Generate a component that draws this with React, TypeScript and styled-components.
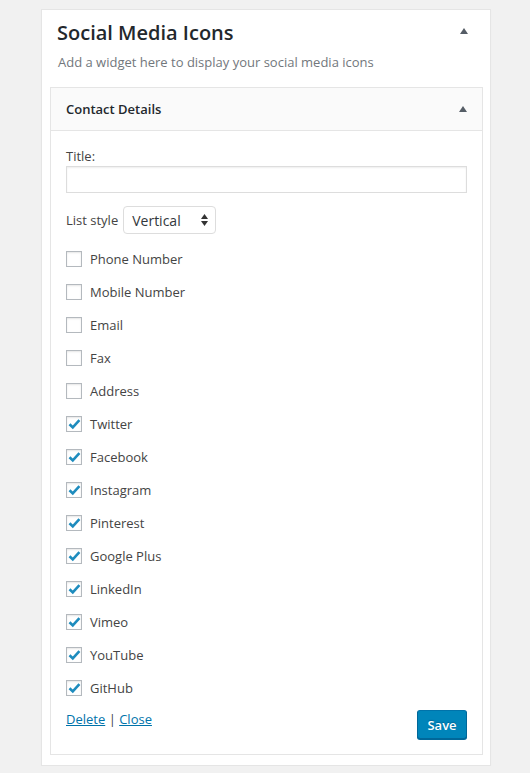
import React from "react";
import styled, { createGlobalStyle } from "styled-components";

const Global = createGlobalStyle`
  html, body { margin: 0; padding: 0; background: #f1f1f1; }
  body { font-family: "Open Sans", "Liberation Sans", sans-serif; font-size: 13px; color: #444; }
  * { box-sizing: border-box; }
`;

const Card = styled.div`
  margin: 9px 0 0 41px;
  width: 450px;
  background: #fff;
  border: 1px solid #e5e5e5;
  box-shadow: 0 1px 1px rgba(0, 0, 0, 0.04);
  padding-bottom: 10px;
`;

const CardHead = styled.div`
  display: flex;
  align-items: flex-start;
  justify-content: space-between;
  padding: 10px 22px 0 15px;
`;

const CardTitle = styled.h2`
  margin: 0;
  font-size: 20px;
  font-weight: 600;
  line-height: 26px;
  color: #23282d;
`;

const Desc = styled.p`
  margin: 7px 0 16px 16px;
  line-height: 18px;
  color: #72777c;
  font-size: 13px;
`;

const Widget = styled.div`
  margin: 0 7px 0 8px;
  border: 1px solid #e5e5e5;
  background: #fff;
`;

const WidgetHead = styled.div`
  display: flex;
  align-items: center;
  justify-content: space-between;
  height: 43px;
  padding: 0 15px 0 15px;
  background: #fafafa;
  border-bottom: 1px solid #e5e5e5;
`;

const WidgetTitle = styled.h3`
  margin: 0;
  font-size: 13px;
  font-weight: 600;
  color: #23282d;
`;

const Arrow = styled.span<{ $top: number }>`
  display: block;
  width: 0;
  height: 0;
  margin-top: ${(p) => p.$top}px;
  border-left: 4px solid transparent;
  border-right: 4px solid transparent;
  border-bottom: 6px solid #555d66;
`;

const Body = styled.div`
  padding: 16px 15px 15px 15px;
`;

const Label = styled.label`
  display: block;
  line-height: 18px;
  color: #444;
`;

const TextInput = styled.div`
  margin-top: 1px;
  height: 27px;
  border: 1px solid #ddd;
  box-shadow: inset 0 1px 2px rgba(0, 0, 0, 0.07);
  background: #fff;
`;

const SelectRow = styled.div`
  display: flex;
  align-items: center;
  gap: 5px;
  margin-top: 13px;
`;

const Select = styled.div`
  display: flex;
  align-items: center;
  justify-content: space-between;
  width: 93px;
  height: 28px;
  padding: 0 7px 0 8px;
  border: 1px solid #ddd;
  border-radius: 4px;
  background: #fff;
  font-size: 14px;
  color: #32373c;
`;

const List = styled.div`
  display: flex;
  flex-direction: column;
  margin-top: 8px;
`;

const Row = styled.label`
  display: flex;
  align-items: center;
  gap: 8px;
  height: 33px;
  color: #444;
`;

const Box = styled.span`
  display: flex;
  align-items: center;
  justify-content: center;
  width: 16px;
  height: 16px;
  border: 1px solid #b4b9be;
  background: #fff;
  box-shadow: inset 0 1px 2px rgba(0, 0, 0, 0.1);
`;

const Footer = styled.div`
  display: flex;
  align-items: flex-start;
  justify-content: space-between;
  margin-top: 4px;
`;

const Links = styled.div`
  margin-top: 2px;
  color: #444;
`;

const Link = styled.a`
  color: #0073aa;
  text-decoration: underline;
  cursor: pointer;
`;

const SaveBtn = styled.button`
  font-family: inherit;
  width: 50px;
  height: 29px;
  margin-top: 2px;
  background: #0085ba;
  border: 1px solid;
  border-color: #0073aa #006799 #006799;
  border-radius: 3px;
  box-shadow: 0 1px 0 #006799;
  color: #fff;
  font-size: 13px;
  font-weight: 600;
  padding: 0;
  text-shadow: 0 -1px 1px #006799;
`;

const items: [string, boolean][] = [
  ["Phone Number", false],
  ["Mobile Number", false],
  ["Email", false],
  ["Fax", false],
  ["Address", false],
  ["Twitter", true],
  ["Facebook", true],
  ["Instagram", true],
  ["Pinterest", true],
  ["Google Plus", true],
  ["LinkedIn", true],
  ["Vimeo", true],
  ["YouTube", true],
  ["GitHub", true],
];

const Check = () => (
  <svg width="13" height="12" viewBox="0 0 13 12">
    <path d="M1.5 6.2 L4.8 9.4 L11.4 2.2" fill="none" stroke="#1e8cbe" strokeWidth="2.6" strokeLinejoin="miter" />
  </svg>
);

const SelectArrows = () => (
  <svg width="7" height="12" viewBox="0 0 7 12">
    <path d="M3.5 0 L7 5 L0 5 Z" fill="#333" />
    <path d="M3.5 12 L7 7 L0 7 Z" fill="#333" />
  </svg>
);

export default function App() {
  return (
    <>
      <Global />
      <Card>
        <CardHead>
          <CardTitle>Social Media Icons</CardTitle>
          <Arrow $top={8} />
        </CardHead>
        <Desc>Add a widget here to display your social media icons</Desc>
        <Widget>
          <WidgetHead>
            <WidgetTitle>Contact Details</WidgetTitle>
            <Arrow $top={-1} />
          </WidgetHead>
          <Body>
            <Label>Title:</Label>
            <TextInput />
            <SelectRow>
              <Label>List style</Label>
              <Select>
                <span>Vertical</span>
                <SelectArrows />
              </Select>
            </SelectRow>
            <List>
              {items.map(([name, checked]) => (
                <Row key={name}>
                  <Box>{checked && <Check />}</Box>
                  <span>{name}</span>
                </Row>
              ))}
            </List>
            <Footer>
              <Links>
                <Link>Delete</Link> | <Link>Close</Link>
              </Links>
              <SaveBtn>Save</SaveBtn>
            </Footer>
          </Body>
        </Widget>
      </Card>
    </>
  );
}
